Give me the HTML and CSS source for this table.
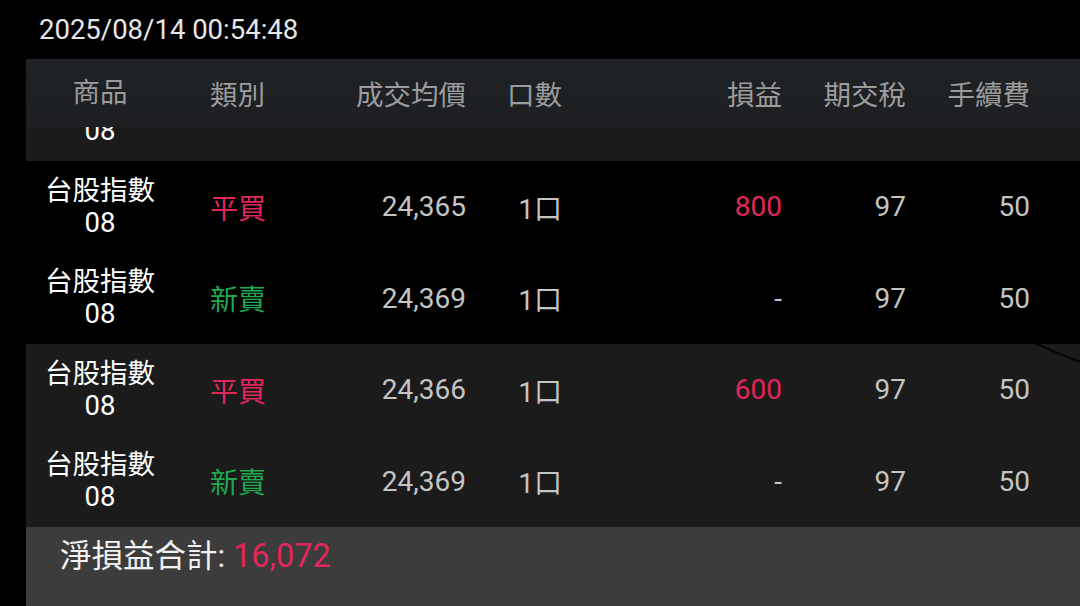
FILE: index.html
```html
<!DOCTYPE html>
<html lang="zh-Hant">
<head>
    <meta charset="UTF-8">
    <meta name="viewport" content="width=device-width, initial-scale=1.0">
    <title>成交明細</title>
    <link rel="stylesheet" href="styles.css">
</head>
<body>

    <div class="timestamp">2025/08/14 00:54:48</div>

    <div class="panel">
        <!-- Column titles -->
        <div class="row head">
            <div class="product">商品</div>
            <div class="type">類別</div>
            <div class="num">成交均價</div>
            <div class="num">口數</div>
            <div class="num">損益</div>
            <div class="num">期交稅</div>
            <div class="num">手續費</div>
        </div>

        <!-- Row scrolled under the header, only its last line shows -->
        <div class="clipped">
            <div class="row odd">
                <div class="product">08</div>
            </div>
        </div>

        <div class="row">
            <div class="product">台股指數<br>08</div>
            <div class="type buy">平買</div>
            <div class="num">24,365</div>
            <div class="num">1口</div>
            <div class="num up">800</div>
            <div class="num">97</div>
            <div class="num">50</div>
        </div>
        <div class="row">
            <div class="product">台股指數<br>08</div>
            <div class="type sell">新賣</div>
            <div class="num">24,369</div>
            <div class="num">1口</div>
            <div class="num">-</div>
            <div class="num">97</div>
            <div class="num">50</div>
        </div>
        <div class="row odd">
            <div class="product">台股指數<br>08</div>
            <div class="type buy">平買</div>
            <div class="num">24,366</div>
            <div class="num">1口</div>
            <div class="num up">600</div>
            <div class="num">97</div>
            <div class="num">50</div>
        </div>
        <div class="row odd">
            <div class="product">台股指數<br>08</div>
            <div class="type sell">新賣</div>
            <div class="num">24,369</div>
            <div class="num">1口</div>
            <div class="num">-</div>
            <div class="num">97</div>
            <div class="num">50</div>
        </div>

        <div class="total">淨損益合計: <span class="up">16,072</span></div>

        <!-- page curl edge -->
        <svg class="curl" width="46" height="22" viewBox="0 0 46 22">
            <path d="M1 1 C 16 8, 30 14, 46 20" stroke="#060606" stroke-width="2.2" fill="none"/>
        </svg>
    </div>

</body>
</html>
```

FILE: styles.css
```css
body {
    margin: 0;
    background-color: #000;
    font-family: Roboto, "Noto Sans CJK TC", sans-serif;
    overflow: hidden;
}

.timestamp {
    height: 59px;
    line-height: 59px;
    padding-left: 39px;
    font-size: 27.5px;
    color: #e6e6e6;
}

.panel {
    position: relative;
    margin-left: 26px;
}

.row {
    display: grid;
    grid-template-columns: 148px 136px 156px 96px 220px 124px 124px;
    align-items: center;
    height: 91.5px;
    background-color: #000;
    font-size: 28px;
    color: #c4c4c4;
}

.row.odd {
    background-color: #1b1b1b;
}

.head {
    height: 68px;
    background: linear-gradient(#1f2226, #1d1f22);
    font-size: 27.5px;
    color: #9c9c9c;
    position: relative;
    z-index: 1;
}

.clipped {
    height: 34px;
    overflow: hidden;
}

.clipped .row {
    height: 60px;
    margin-top: -26px;
}

.product {
    text-align: center;
    line-height: 32px;
    font-size: 27.5px;
    color: #fff;
}

.head .product {
    color: #9c9c9c;
}

.type {
    padding-left: 36px;
}

.num {
    text-align: right;
}

.buy {
    color: #e2265c;
}

.sell {
    color: #22a94f;
}

.up {
    color: #e2265c;
}

.total {
    height: 79px;
    background-color: #3c3c3c;
    padding-left: 34px;
    padding-top: 9px;
    box-sizing: border-box;
    line-height: 40px;
    font-size: 31.5px;
    color: #f2f2f2;
}

.total .up {
    font-size: 32.5px;
}

.curl {
    position: absolute;
    right: 0;
    top: 283px;
}
```
